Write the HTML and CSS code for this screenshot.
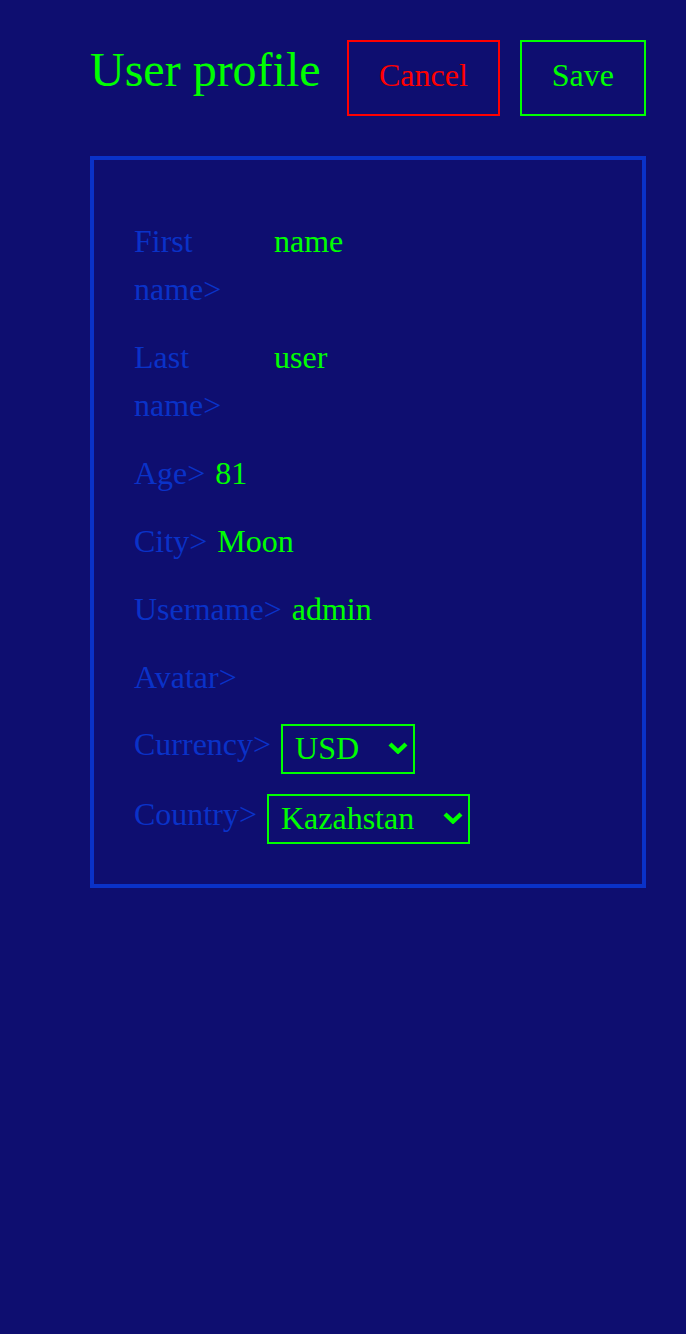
FILE: index.html
```html
<!DOCTYPE html>
<html lang="en">
<head>
<meta charset="utf-8">
<title>User profile</title>
<link rel="stylesheet" href="styles.css">
</head>
<body>
<div class="page">
  <header class="header">
    <h1 class="title">User profile</h1>
    <div class="actions">
      <button class="btn btn-cancel">Cancel</button>
      <button class="btn btn-save">Save</button>
    </div>
  </header>
  <section class="card">
    <div class="row"><span class="label label-wrap">First name&gt;</span><span class="value">name</span></div>
    <div class="row"><span class="label label-wrap">Last name&gt;</span><span class="value">user</span></div>
    <div class="row"><span class="label">Age&gt;</span><span class="value">81</span></div>
    <div class="row"><span class="label">City&gt;</span><span class="value">Moon</span></div>
    <div class="row"><span class="label">Username&gt;</span><span class="value">admin</span></div>
    <div class="row row-avatar"><span class="label">Avatar&gt;</span></div>
    <div class="row row-select">
      <span class="label">Currency&gt;</span>
      <span class="select-wrap">
        <select class="select"><option>USD</option></select>
        <svg class="chevron" width="20" height="12" viewBox="0 0 20 12"><polyline points="2,2 10,9.5 18,2" fill="none" stroke="#00ff00" stroke-width="4.4"/></svg>
      </span>
    </div>
    <div class="row row-select">
      <span class="label">Country&gt;</span>
      <span class="select-wrap">
        <select class="select"><option>Kazahstan</option></select>
        <svg class="chevron" width="20" height="12" viewBox="0 0 20 12"><polyline points="2,2 10,9.5 18,2" fill="none" stroke="#00ff00" stroke-width="4.4"/></svg>
      </span>
    </div>
  </section>
</div>
</body>
</html>
```
FILE: styles.css
```css
html, body {
  margin: 0;
  padding: 0;
  background: #0e0e70;
}
body {
  font-family: "Liberation Serif", "Times New Roman", serif;
  min-height: 1334px;
}
.page {
  padding: 40px 40px 0 90px;
}
.header {
  display: flex;
  align-items: baseline;
  justify-content: space-between;
}
.title {
  margin: 0;
  font-size: 48px;
  font-weight: normal;
  color: #00ff00;
}
.actions {
  display: flex;
  align-items: baseline;
  gap: 20px;
}
.btn {
  font-family: "Liberation Serif", "Times New Roman", serif;
  font-size: 32px;
  line-height: 40px;
  padding: 13px 30px 19px 30px;
  background: transparent;
  border: 2px solid;
  border-radius: 0;
  margin: 0;
}
.btn-cancel {
  color: #ff0000;
  border-color: #ff0000;
}
.btn-save {
  color: #00ff00;
  border-color: #00ff00;
}
.card {
  margin-top: 40px;
  border: 4px solid #0a32c8;
  padding: 57px 40px 40px 40px;
  display: flex;
  flex-direction: column;
  gap: 20px;
}
.row {
  display: flex;
  align-items: flex-start;
  gap: 10px;
  font-size: 32px;
  line-height: 48px;
}
.row-avatar {
  padding-bottom: 3px;
}
.label {
  color: #0a32c8;
}
.label-wrap {
  width: 130px;
  flex: 0 0 130px;
}
.value {
  color: #00ff00;
}
.row-select .label {
  line-height: 40px;
}
.select-wrap {
  position: relative;
  display: inline-block;
}
.select {
  appearance: none;
  -webkit-appearance: none;
  font-family: "Liberation Serif", "Times New Roman", serif;
  font-size: 32px;
  line-height: 36px;
  color: #00ff00;
  background: transparent;
  border: 2px solid #00ff00;
  border-radius: 0;
  height: 50px;
  padding: 0 53px 2px 12px;
  margin: 0;
  outline: none;
  display: block;
}
.select option {
  background: #0e0e70;
}
.chevron {
  position: absolute;
  right: 7px;
  top: 18px;
  pointer-events: none;
}
```
